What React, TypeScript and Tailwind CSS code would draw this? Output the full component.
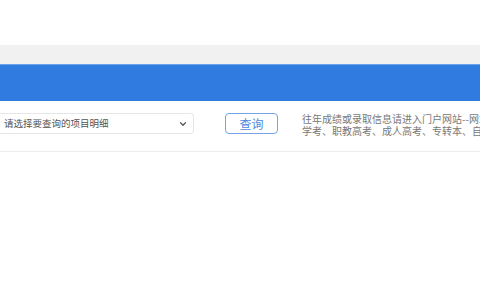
import { ChevronDown } from "lucide-react";

export default function App() {
  return (
    <div
      className="w-[480px] h-[300px] overflow-hidden bg-white"
      style={{ fontFamily: '"Noto Sans CJK SC", "Liberation Sans", sans-serif' }}
    >
      <div className="h-[45px] bg-white" />
      <div className="h-[19px] bg-[#f1f1f1]" />
      <div className="h-[37px] bg-[#2f7be0] border-t border-[#6ea2ea]" />

      <div className="flex items-start h-[51px] border-b border-[#ececec] pt-[12px] overflow-hidden">
        <div className="ml-[-4px] w-[198px] h-[21px] shrink-0 flex items-center justify-between rounded-[3px] border border-[#e6e6e6] pl-[7px] pr-[5px]">
          <span className="text-[9.5px] text-[#555] leading-none">请选择要查询的项目明细</span>
          <ChevronDown size={10} strokeWidth={3} className="text-[#555]" />
        </div>

        <button className="ml-[31px] w-[53px] h-[21px] shrink-0 flex items-center justify-center rounded-[4px] border border-[#74a3e8] text-[12px] text-[#4f88de] leading-none">
          查询
        </button>

        <div className="ml-[24px] flex-1 min-w-0 overflow-hidden whitespace-nowrap text-[10px] text-[#777]">
          <div className="h-[12px] leading-[12px]">往年成绩或录取信息请进入门户网站--网站首页</div>
          <div className="h-[12px] leading-[12px]">学考、职教高考、成人高考、专转本、自学考试</div>
        </div>
      </div>
    </div>
  );
}
